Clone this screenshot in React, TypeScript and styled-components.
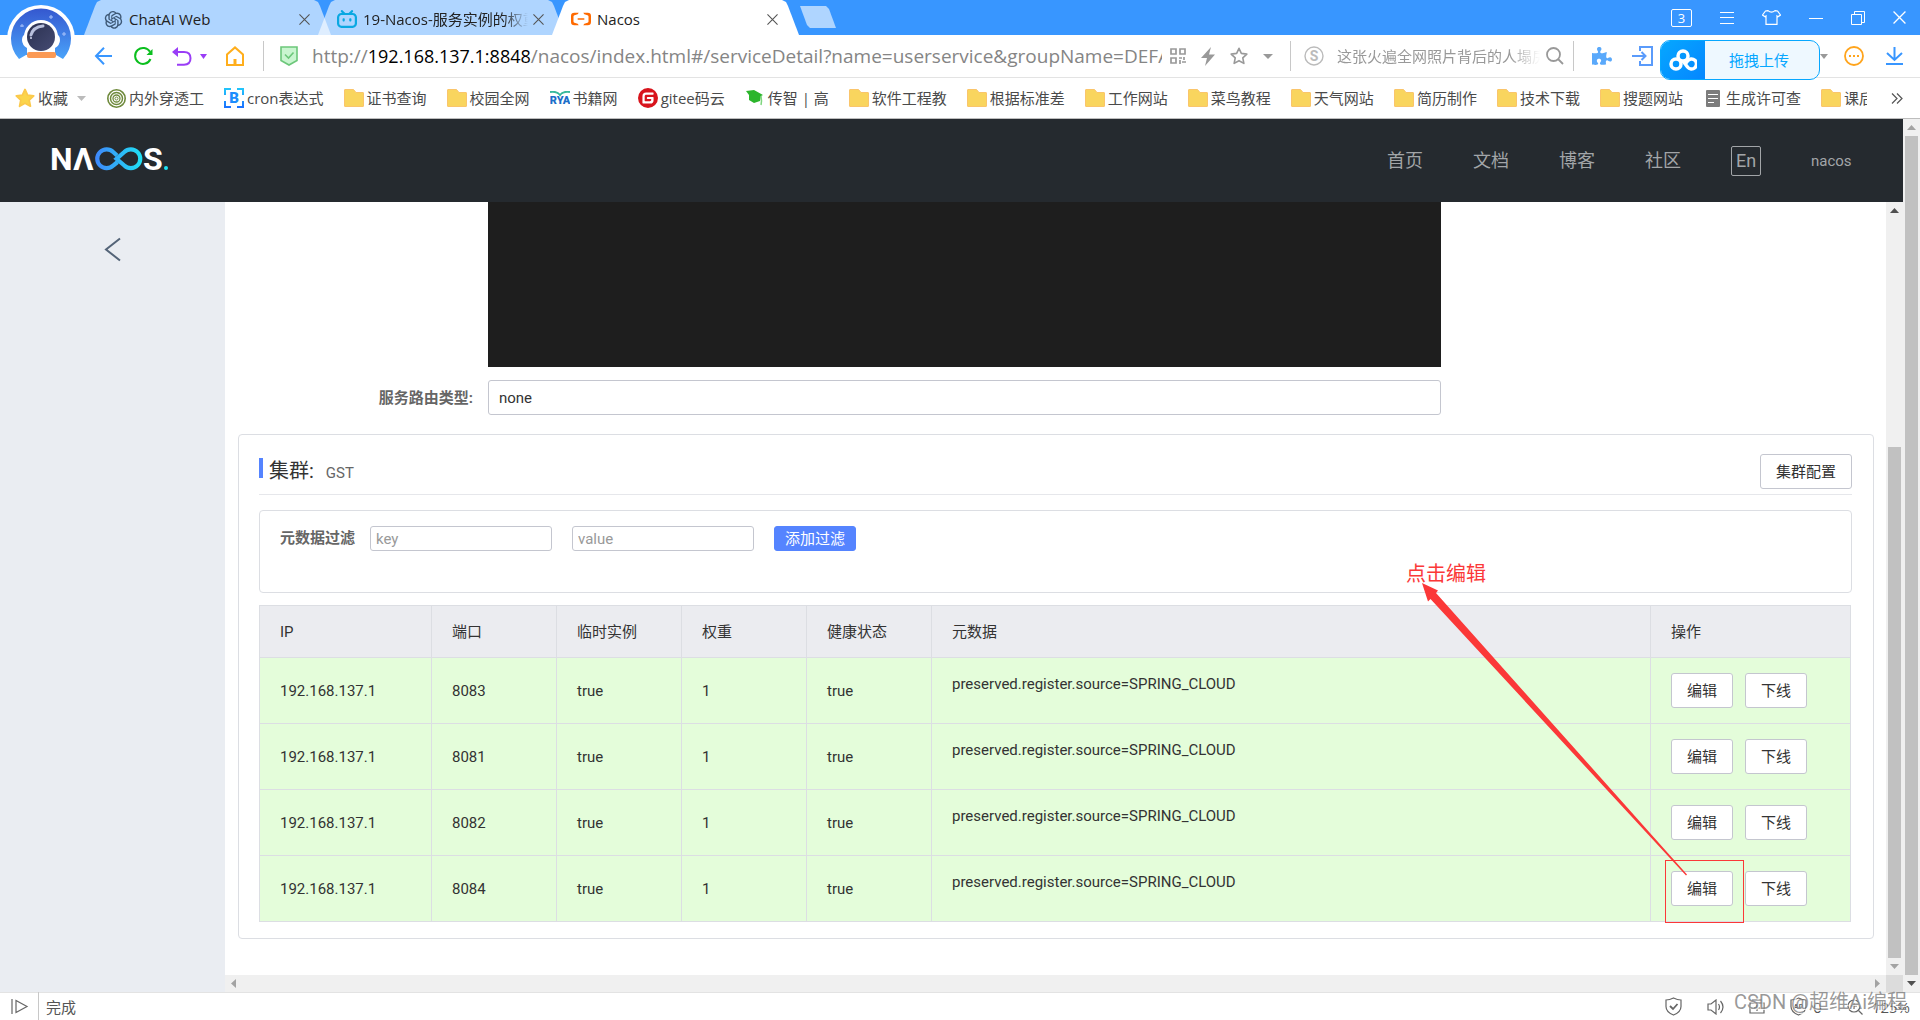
import React from "react";
import styled, { createGlobalStyle, css } from "styled-components";
import { AiOutlineOpenAI } from "react-icons/ai";
import { FaPuzzlePiece } from "react-icons/fa";
import { SiAlibabacloud, SiBilibili, SiGitee } from "react-icons/si";

const GlobalStyle = createGlobalStyle`
  *, *::before, *::after { box-sizing: border-box; }
  body { margin: 0; background: #fff; }
  button, input { font: inherit; color: inherit; }
  button { padding: 0; border: 0; background: none; cursor: pointer; }
  a { color: inherit; text-decoration: none; }
  svg { display: block; flex: none; }
`;

const uiFont = `"Open Sans", "Noto Sans CJK SC", sans-serif`;
const pageFont = `Roboto, "Noto Sans CJK SC", sans-serif`;

/* ---------- window ---------- */

const Window = styled.div`
  position: relative;
  display: flex;
  flex-direction: column;
  height: 100vh;
  overflow: hidden;
  font: 15px/20px ${uiFont};
  color: #333;
`;

const TitleBar = styled.div`
  display: flex;
  justify-content: space-between;
  height: 35px;
  padding-left: 84px;
  background: #3896ff;
`;

const Tabs = styled.div`
  display: flex;
`;

const Tab = styled.div<{ $active?: boolean }>`
  display: flex;
  align-items: center;
  gap: 5px;
  width: 247px;
  padding: 3px 21px 0 18px;
  margin-right: -13px;
  background: ${(p) => (p.$active ? "#fff" : "rgba(255, 255, 255, 0.6)")};
  clip-path: polygon(0 100%, 11px 6px, 13px 2px, 17px 0, 230px 0, 234px 2px, 236px 6px, 100% 100%);
  color: #222;
`;

const TabIcon = styled.span`
  display: flex;
  justify-content: center;
  width: 22px;
`;

const TabTitle = styled.span<{ $fade?: boolean }>`
  flex: 1;
  min-width: 0;
  overflow: hidden;
  white-space: nowrap;
  ${(p) =>
    p.$fade &&
    css`
      mask-image: linear-gradient(90deg, #000 85%, transparent);
    `}
`;

const IconButton = styled.button`
  display: flex;
  align-items: center;
  justify-content: center;
  flex: none;
`;

const NewTab = styled.button`
  width: 36px;
  height: 22px;
  margin: 6px 0 0 14px;
  background: #afd5ff;
  clip-path: polygon(0 0, 26px 0, 29px 3px, 100% 100%, 10px 100%, 7px 19px);
`;

const WindowControls = styled.div`
  display: flex;
  align-items: center;
  gap: 28px;
  padding-right: 14px;
  color: #fff;
`;

const TabCount = styled.button`
  width: 21px;
  height: 18px;
  border: 1px solid #fff;
  border-radius: 2px;
  font-size: 13px;
  line-height: 16px;
`;

/* ---------- address bar ---------- */

const Toolbar = styled.div`
  display: flex;
  align-items: center;
  height: 43px;
  padding: 0 17px 0 94px;
  border-bottom: 1px solid #e3e3e3;
`;

const NavButtons = styled.div`
  display: flex;
  align-items: center;
  gap: 19px;
`;

const UndoGroup = styled.div`
  display: flex;
  align-items: center;
  gap: 8px;
`;

const Divider = styled.span`
  flex: none;
  width: 1px;
  height: 30px;
  background: #c8c8c8;
`;

const AddressBar = styled.div`
  display: flex;
  flex: 1;
  align-items: center;
  gap: 14px;
  min-width: 0;
  padding: 0 17px 0 16px;
`;

const Address = styled.div`
  flex: 1;
  min-width: 0;
  overflow: hidden;
  white-space: nowrap;
  outline: none;
  font-size: 19px;
  line-height: 28px;
  color: #858585;
`;

const Host = styled.span`
  font-size: 18px;
  color: #000;
`;

const AddressTools = styled.div`
  display: flex;
  align-items: center;
  gap: 15px;
  margin-left: -6px;
`;

const SearchBox = styled.form`
  display: flex;
  align-items: center;
  width: 282px;
  padding: 0 9px 0 13px;
`;

const SearchInput = styled.input`
  flex: 1;
  min-width: 0;
  height: 28px;
  margin: 0 6px 0 13px;
  padding: 0;
  border: 0;
  outline: none;
  mask-image: linear-gradient(90deg, #000 85%, transparent);
  &::placeholder {
    color: #999;
    opacity: 1;
  }
`;

const Extensions = styled.div`
  display: flex;
  align-items: center;
  justify-content: space-between;
  width: 329px;
  padding-left: 18px;
`;

const ExtensionGroup = styled.div<{ $gap: number }>`
  display: flex;
  align-items: center;
  gap: ${(p) => p.$gap}px;
`;

const UploadWidget = styled.button`
  position: absolute;
  top: 40px;
  right: 100px;
  display: flex;
  width: 160px;
  height: 40px;
  border: 1px solid #06a7ff;
  border-radius: 10px;
  overflow: hidden;
  background: #eef8ff;
  color: #06a7ff;
`;

const UploadLogo = styled.span`
  display: flex;
  align-items: center;
  justify-content: center;
  width: 44px;
  height: 38px;
  background: linear-gradient(135deg, #06a7ff, #0586ff);
`;

const UploadText = styled.span`
  flex: 1;
  padding-right: 6px;
  line-height: 38px;
  text-align: center;
`;

const Avatar = styled.button`
  position: absolute;
  top: 4px;
  left: 6px;
`;

/* ---------- bookmarks ---------- */

const Bookmarks = styled.nav`
  display: flex;
  align-items: center;
  height: 41px;
  padding: 0 17px 0 15px;
  border-bottom: 1px solid #bdbdbd;
  color: #4a4a4a;
`;

const Favorites = styled.button`
  display: flex;
  align-items: center;
  gap: 3px;
  margin-right: 20px;
`;

const FavoritesText = styled.span`
  margin-right: 6px;
`;

const BookmarkList = styled.div`
  display: flex;
  flex: 1;
  gap: 20px;
  min-width: 0;
  margin-right: 24px;
  overflow: hidden;
`;

const Bookmark = styled.a`
  display: flex;
  flex: none;
  align-items: center;
  gap: 3px;
  white-space: nowrap;
`;

const BookmarkIcon = styled.span`
  display: flex;
  justify-content: center;
  width: 20px;
`;

/* ---------- scroll bars ---------- */

const ScrollTrack = styled.div<{ $horizontal?: boolean }>`
  display: flex;
  flex: none;
  flex-direction: ${(p) => (p.$horizontal ? "row" : "column")};
  justify-content: space-between;
  ${(p) => (p.$horizontal ? "height: 17px;" : "width: 17px;")}
  background: #f0f0f0;
`;

const ScrollArrow = styled.button<{ $dark?: boolean }>`
  display: flex;
  flex: none;
  align-items: center;
  justify-content: center;
  width: 17px;
  height: 17px;
  color: ${(p) => (p.$dark ? "#505050" : "#a3a3a3")};
`;

const ScrollSpace = styled.div<{ $grow: number }>`
  flex: ${(p) => p.$grow} 0 0;
`;

const ScrollThumb = styled(ScrollSpace)`
  margin: 0 2px;
  background: #c1c1c1;
`;

const ScrollCorner = styled.div`
  background: #dcdcdc;
`;

/* ---------- console page ---------- */

const Viewport = styled.div`
  display: flex;
  flex: 1;
  min-height: 0;
`;

const Console = styled.div`
  display: flex;
  flex: 1;
  flex-direction: column;
  min-width: 0;
  font-family: ${pageFont};
`;

const Header = styled.header`
  display: flex;
  flex: none;
  align-items: center;
  justify-content: space-between;
  height: 83px;
  padding: 0 50px 0 51px;
  background: #252a2f;
`;

const HeaderNav = styled.nav`
  display: flex;
  align-items: center;
  gap: 50px;
  font-size: 18px;
  color: #a2a5a8;
`;

const LanguageButton = styled.button`
  width: 30px;
  height: 30px;
  border: 1px solid #a2a5a8;
  border-radius: 2px;
  line-height: 26px;
`;

const UserLink = styled.a`
  min-width: 42px;
  font-size: 15px;
`;

const Body = styled.div`
  display: flex;
  flex: 1;
  min-height: 0;
`;

const Sidebar = styled.aside`
  flex: none;
  width: 225px;
  padding: 35px 0 0 104px;
  background: #eaedf2;
`;

const ScrollGrid = styled.div`
  display: grid;
  flex: 1;
  grid-template: minmax(0, 1fr) 17px / minmax(0, 1fr) 17px;
  min-width: 0;
`;

const Content = styled.main`
  padding: 0 12px 0 13px;
  overflow: hidden;
`;

const FormRow = styled.div`
  display: grid;
  grid-template-columns: 250px 11fr 5fr;
  align-items: center;
  margin-bottom: 13px;
`;

const FormLabel = styled.label`
  padding-right: 15px;
  text-align: right;
  font-weight: 700;
  color: #666;
`;

const CodeEditor = styled.div`
  grid-column: 2;
  height: 165px;
  background: #1e1e1e;
`;

const TextField = styled.input<{ $small?: boolean }>`
  width: ${(p) => (p.$small ? "182px" : "100%")};
  height: ${(p) => (p.$small ? "25px" : "35px")};
  padding: 0 ${(p) => (p.$small ? "5px" : "10px")};
  border: 1px solid #c4c6cf;
  border-radius: 3px;
  outline: none;
  &::placeholder {
    color: #999;
    opacity: 1;
  }
`;

const Button = styled.button<{ $primary?: boolean }>`
  height: 35px;
  padding: 0 15px;
  border: 1px solid #c4c6cf;
  border-radius: 3px;
  background: #fff;
  white-space: nowrap;
  ${(p) =>
    p.$primary &&
    css`
      height: 25px;
      padding: 0 10px;
      border-color: #5584ff;
      background: #5584ff;
      color: #fff;
    `}
`;

const Card = styled.section`
  margin-top: 19px;
  padding: 19px 21px 16px 20px;
  border: 1px solid #dcdee3;
  border-radius: 4px;
`;

const CardHeader = styled.div`
  display: flex;
  align-items: center;
  justify-content: space-between;
  padding-bottom: 5px;
  border-bottom: 1px solid #e6e7eb;
`;

const CardTitle = styled.h2`
  display: flex;
  align-items: baseline;
  margin: 0;
  font-size: 20px;
  font-weight: 400;
  line-height: 26px;
  &::before {
    content: "";
    align-self: flex-start;
    width: 4px;
    height: 20px;
    margin-right: 6px;
    background: #5584ff;
  }
`;

const ClusterName = styled.span`
  margin-left: 12px;
  font-size: 15px;
  color: #666;
`;

const FilterBox = styled.form`
  display: flex;
  align-items: flex-start;
  gap: 20px;
  height: 83px;
  margin: 15px 0 12px;
  padding: 15px 20px;
  border: 1px solid #dcdee3;
  border-radius: 4px;
`;

const FilterLabel = styled.label`
  margin-right: -5px;
  font-weight: 700;
  line-height: 25px;
  color: #666;
`;

const Table = styled.table`
  width: calc(100% - 1px);
  border-collapse: collapse;
  table-layout: fixed;
`;

const Column = styled.col<{ $width?: number }>`
  width: ${(p) => (p.$width ? `${p.$width}px` : "auto")};
`;

const HeadCell = styled.th`
  height: 52px;
  padding: 0 20px;
  border: 1px solid #dcdee3;
  background: #ebecf0;
  font-weight: 400;
  text-align: left;
`;

const Cell = styled.td`
  height: 66px;
  padding: 0 20px;
  border: 1px solid #dcdee3;
  background: #e4fdda;
`;

const Metadata = styled.p`
  margin: 0 0 13px;
`;

const Actions = styled.div`
  display: flex;
  gap: 12px;
`;

const Marked = styled.div`
  position: relative;
`;

const MarkFrame = styled.span`
  position: absolute;
  top: -11px;
  left: -6px;
  width: 79px;
  height: 63px;
  border: 1px solid #fb3838;
  pointer-events: none;
`;

const MarkArrow = styled.svg`
  position: absolute;
  top: -288px;
  left: -249px;
  pointer-events: none;
`;

const MarkText = styled.span`
  position: absolute;
  top: -311px;
  left: -265px;
  font-size: 20px;
  line-height: 28px;
  white-space: nowrap;
  color: #fb3838;
`;

/* ---------- status bar ---------- */

const StatusBar = styled.footer`
  display: flex;
  align-items: center;
  justify-content: space-between;
  height: 28px;
  padding: 0 10px 0 11px;
  border-top: 1px solid #e3e3e3;
  color: #555;
`;

const StatusGroup = styled.div<{ $gap: number }>`
  display: flex;
  align-items: center;
  gap: ${(p) => p.$gap}px;
`;

const AdBlock = styled.button`
  display: flex;
  align-items: center;
  gap: 6px;
`;

const ZoomButton = styled(AdBlock)`
  gap: 9px;
`;

const Watermark = styled.span`
  position: absolute;
  right: 13px;
  bottom: 4px;
  font: 20px/28px Roboto, "Noto Sans CJK SC", sans-serif;
  color: rgba(120, 120, 120, 0.75);
  text-shadow: 1px 1px 0 rgba(255, 255, 255, 0.8);
  pointer-events: none;
`;

/* ---------- drawings ---------- */

const Caret = ({ color = "#999", size = 9 }: { color?: string; size?: number }) => (
  <svg width={size} height="5" viewBox="0 0 10 6" preserveAspectRatio="none">
    <path d="M0 0h10L5 6z" fill={color} />
  </svg>
);

const CloseIcon = ({ size = 11, color = "#555" }: { size?: number; color?: string }) => (
  <svg width={size} height={size} viewBox="0 0 12 12" stroke={color} strokeWidth="1.2">
    <path d="M.5.5l11 11M11.500.5l-11 11" />
  </svg>
);

const AvatarDrawing = () => (
  <svg width="70" height="66" viewBox="0 0 70 66">
    <defs>
      <linearGradient id="sky" x2="0" y2="1">
        <stop offset="0" stopColor="#3558cf" />
        <stop offset="1" stopColor="#4aa3fa" />
      </linearGradient>
      <linearGradient id="visor" x2="1" y2="1">
        <stop offset="0" stopColor="#2b3050" />
        <stop offset="1" stopColor="#454b73" />
      </linearGradient>
    </defs>
    <circle cx="35" cy="35" r="34" fill="#fff" />
    <path d="M13 55A30 30 0 1 1 57 55L50 51H20z" fill="url(#sky)" />
    <path d="M20 30q-4 1-4 6t5 8v8l-4 3h36l-4-3v-8q5-3 5-8t-4-6z" fill="#fff" />
    <circle cx="35" cy="33" r="17" fill="#fff" />
    <circle cx="35" cy="33" r="14" fill="url(#visor)" />
    <path d="M25 31q2-8 12-9" fill="none" stroke="#b9c0dc" strokeWidth="3" strokeLinecap="round" />
    <circle cx="25" cy="34" r="1" fill="#d5daef" />
    <rect x="21" y="48" width="29" height="6" rx="2" fill="#fb9a55" />
    <path d="M45 11v4M43 13h4M58 28v4M56 30h4M16 20v3M14 22h4" stroke="#a9c3fb" />
  </svg>
);

const NacosLogo = () => (
  <svg width="120" height="30" viewBox="0 0 120 30" role="img" aria-label="Nacos">
    <defs>
      <linearGradient id="loop" gradientUnits="userSpaceOnUse" x1="44" x2="92">
        <stop offset="0" stopColor="#3f86fb" />
        <stop offset="1" stopColor="#1fe3f4" />
      </linearGradient>
    </defs>
    <g fill="#fff" fontSize="32" fontWeight="700">
      <text x="-1" y="24" fontFamily="Liberation Sans Narrow, Roboto, sans-serif">N</text>
      <text x="22" y="24" fontFamily="Roboto, sans-serif">Λ</text>
      <text x="92" y="24" fontFamily="Roboto, sans-serif">S</text>
    </g>
    <g fill="none" stroke="url(#loop)" strokeWidth="4.200">
      <path d="M66 9.500L62.200 6A9.400 9.400 0 1 0 62.200 19.500L66.500 16" />
      <path d="M65.500 12.800L73.300 6A9.400 9.400 0 1 1 73.300 19.500z" />
    </g>
    <circle cx="115" cy="22" r="2" fill="#1fe3f4" />
  </svg>
);

const FolderIcon = () => (
  <svg width="20" height="18" viewBox="0 0 20 18">
    <path d="M.5 1q0-.5.5-.5h8.500l2.500 3H19q.5 0 .5.5v13q0 .5-.5.5H1q-.5 0-.5-.5z" fill="#f9d55e" stroke="#fac56b" />
  </svg>
);

const SpiralIcon = () => (
  <svg width="19" height="19" viewBox="0 0 19 19" fill="none" stroke="#6f8a3c">
    <circle cx="9.500" cy="9.500" r="8.700" strokeWidth="1.600" />
    <circle cx="9.500" cy="9.500" r="6" strokeWidth="1.500" />
    <circle cx="9.500" cy="9.500" r="3.500" strokeWidth="1.300" />
    <circle cx="9.500" cy="9.500" r="1.500" />
  </svg>
);

const BracketIcon = () => (
  <svg width="20" height="20" viewBox="0 0 20 20">
    <defs>
      <linearGradient id="frame" x2="0" y2="1">
        <stop offset="0" stopColor="#22c4fb" />
        <stop offset="1" stopColor="#1a73ff" />
      </linearGradient>
    </defs>
    <path d="M1 7V1h6M13 1h6v6M19 13v6h-6M7 19H1v-6" fill="none" stroke="url(#frame)" strokeWidth="2" />
    <text x="10" y="15" textAnchor="middle" fontFamily="Roboto, sans-serif" fontSize="15" fontWeight="900" fill="#1d8dfd">
      B
    </text>
  </svg>
);

const BooksIcon = () => (
  <svg width="20" height="14" viewBox="0 0 20 14">
    <path d="M0 1q7-1 10 3q3-4 10-3" fill="none" stroke="#38b99b" strokeWidth="2" />
    <text x="10" y="13" textAnchor="middle" fontFamily="Roboto, sans-serif" fontSize="11" fontWeight="900" fill="#1c6fc9">
      RYA
    </text>
  </svg>
);

const CapIcon = () => (
  <svg width="20" height="18" viewBox="0 0 20 18">
    <path d="M1 2l8-1 9 5-2 1-1 5-6 2-5-3V6z" fill="#2cb52c" />
    <path d="M16 7q1 5 0 9" fill="none" stroke="#7fd67f" strokeWidth="1.500" />
  </svg>
);

const NoteIcon = () => (
  <svg width="14" height="17" viewBox="0 0 14 17">
    <rect width="14" height="17" rx="1" fill="#7c7c7c" />
    <path d="M2 4.500h10M2 8.500h10M2 12.500h6" stroke="#fff" />
  </svg>
);

const StarShape = ({ size, fill, stroke }: { size: number; fill: string; stroke: string }) => (
  <svg width={size} height={size} viewBox="0 0 20 20">
    <path
      d="M10 1.500l2.600 5.600 6.100.8-4.500 4.200 1.200 6.100L10 15.200l-5.400 3 1.200-6.100L1.300 7.900l6.100-.8z"
      fill={fill}
      stroke={stroke}
      strokeWidth="1.800"
      strokeLinejoin="round"
    />
  </svg>
);

/* ---------- data ---------- */

const bookmarks: { label: string; icon?: React.ReactNode }[] = [
  { label: "内外穿透工", icon: <SpiralIcon /> },
  { label: "cron表达式", icon: <BracketIcon /> },
  { label: "证书查询" },
  { label: "校园全网" },
  { label: "书籍网", icon: <BooksIcon /> },
  { label: "gitee码云", icon: <SiGitee size={20} color="#d8141c" /> },
  { label: "传智 | 高", icon: <CapIcon /> },
  { label: "软件工程教" },
  { label: "根据标准差" },
  { label: "工作网站" },
  { label: "菜鸟教程" },
  { label: "天气网站" },
  { label: "简历制作" },
  { label: "技术下载" },
  { label: "搜题网站" },
  { label: "生成许可查", icon: <NoteIcon /> },
  { label: "课后作业" },
];

const columns: { title: string; width?: number }[] = [
  { title: "IP", width: 172 },
  { title: "端口", width: 125 },
  { title: "临时实例", width: 125 },
  { title: "权重", width: 125 },
  { title: "健康状态", width: 125 },
  { title: "元数据" },
  { title: "操作", width: 200 },
];

const instances = ["8083", "8081", "8082", "8084"].map((port) => ({
  ip: "192.168.137.1",
  port,
  ephemeral: "true",
  weight: 1,
  healthy: "true",
  metadata: "preserved.register.source=SPRING_CLOUD",
}));

/* ---------- parts ---------- */

const arrowPaths = {
  up: "M0 7h9L4.500 2z",
  down: "M0 2h9L4.500 7z",
  left: "M7 0v9L2 4.500z",
  right: "M2 0v9l5-4.500z",
};

function Arrow({ direction, dark }: { direction: keyof typeof arrowPaths; dark?: boolean }) {
  return (
    <ScrollArrow type="button" $dark={dark} aria-label={`scroll ${direction}`}>
      <svg width="9" height="9" viewBox="0 0 9 9" fill="currentColor">
        <path d={arrowPaths[direction]} />
      </svg>
    </ScrollArrow>
  );
}

function BrowserTabs() {
  return (
    <TitleBar>
      <Tabs>
        <Tab>
          <TabIcon>
            <AiOutlineOpenAI size={23} color="#3f5a78" />
          </TabIcon>
          <TabTitle>ChatAI Web</TabTitle>
          <IconButton type="button" aria-label="关闭标签">
            <CloseIcon />
          </IconButton>
        </Tab>
        <Tab>
          <TabIcon>
            <SiBilibili size={20} color="#0aa8e2" />
          </TabIcon>
          <TabTitle $fade>19-Nacos-服务实例的权重</TabTitle>
          <IconButton type="button" aria-label="关闭标签">
            <CloseIcon />
          </IconButton>
        </Tab>
        <Tab $active>
          <TabIcon>
            <SiAlibabacloud size={20} color="#ff6a00" />
          </TabIcon>
          <TabTitle>Nacos</TabTitle>
          <IconButton type="button" aria-label="关闭标签">
            <CloseIcon />
          </IconButton>
        </Tab>
        <NewTab type="button" aria-label="新标签" />
      </Tabs>
      <WindowControls>
        <TabCount type="button">3</TabCount>
        <IconButton type="button" aria-label="菜单">
          <svg width="14" height="12" viewBox="0 0 14 12" stroke="#fff">
            <path d="M0 .5h14M0 5.500h14M0 11.500h14" />
          </svg>
        </IconButton>
        <IconButton type="button" aria-label="皮肤">
          <svg width="19" height="15" viewBox="0 0 19 15" fill="none" stroke="#fff" strokeWidth="1.200">
            <path d="M6 .6q3.500 3 7 0l2.500.4 3 4-2.500 1.800-1-.8v8.400H4V6l-1 .8L.5 5l3-4z" />
          </svg>
        </IconButton>
        <IconButton type="button" aria-label="最小化">
          <svg width="14" height="12" viewBox="0 0 14 12" stroke="#fff">
            <path d="M0 6.500h14" />
          </svg>
        </IconButton>
        <IconButton type="button" aria-label="还原">
          <svg width="14" height="14" viewBox="0 0 14 14" fill="none" stroke="#fff">
            <path d="M.5 3.500h10v10H.5zM3.500 3V.5h10v11H11" />
          </svg>
        </IconButton>
        <IconButton type="button" aria-label="关闭">
          <CloseIcon size={13} color="#fff" />
        </IconButton>
      </WindowControls>
    </TitleBar>
  );
}

function BrowserToolbar() {
  return (
    <Toolbar>
      <NavButtons>
        <IconButton type="button" aria-label="后退">
          <svg width="20" height="18" viewBox="0 0 20 18" fill="none" stroke="#3896ff" strokeWidth="2">
            <path d="M18 9H2M10 .8L2 9l8 8.200" />
          </svg>
        </IconButton>
        <IconButton type="button" aria-label="刷新">
          <svg width="20" height="20" viewBox="0 0 20 20">
            <path d="M17.500 13A8 8 0 1 1 17 5.800" fill="none" stroke="#0bbf1e" strokeWidth="2" />
            <path d="M19.500 3v6h-6z" fill="#0bbf1e" />
          </svg>
        </IconButton>
        <UndoGroup>
          <IconButton type="button" aria-label="撤销">
            <svg width="20" height="19" viewBox="0 0 20 19">
              <path d="M4 5h8q6.500 0 6.500 6.300T12 17.700H5" fill="none" stroke="#9a3df6" strokeWidth="2" />
              <path d="M6 0v10L0 5z" fill="#9a3df6" />
            </svg>
          </IconButton>
          <Caret color="#9a3df6" size={7} />
        </UndoGroup>
        <IconButton type="button" aria-label="主页">
          <svg width="18" height="20" viewBox="0 0 18 20" fill="none" stroke="#ffae1c" strokeWidth="2">
            <path d="M1 18.900V8.500L9 1.400l8 7.100v10.400z" />
            <path d="M9 19v-6" strokeWidth="3" />
          </svg>
        </IconButton>
        <Divider />
      </NavButtons>
      <AddressBar>
        <svg width="18" height="20" viewBox="0 0 18 20" fill="#c9f5d0" stroke="#6cc77a" strokeWidth="1.600">
          <path d="M1 1h16v13.500L9 19l-8-4.500z" />
          <path d="M5 8.500l3.500 3.500 5-5.500" fill="none" />
        </svg>
        <Address role="textbox" aria-label="地址" contentEditable suppressContentEditableWarning spellCheck={false}>
          http://<Host>192.168.137.1:8848</Host>
          /nacos/index.html#/serviceDetail?name=userservice&amp;groupName=DEFAULT_GROUP
        </Address>
        <AddressTools>
          <IconButton type="button" aria-label="二维码">
            <svg width="16" height="16" viewBox="0 0 16 16" fill="none" stroke="#999" strokeWidth="1.700">
              <path d="M1 1h5v5H1zM10 1h5v5h-5zM1 10h5v5H1z" />
              <path d="M9 10h3M14 9v3M10 12v4M12 14h4" />
            </svg>
          </IconButton>
          <IconButton type="button" aria-label="加速">
            <svg width="14" height="19" viewBox="0 0 14 19" fill="#999">
              <path d="M10 0L0 11h6L4 19 14 7.500H8z" />
            </svg>
          </IconButton>
          <IconButton type="button" aria-label="收藏本页">
            <StarShape size={18} fill="none" stroke="#999" />
          </IconButton>
          <IconButton type="button" aria-label="更多">
            <Caret size={10} />
          </IconButton>
        </AddressTools>
      </AddressBar>
      <Divider />
      <SearchBox role="search">
        <svg width="20" height="20" viewBox="0 0 20 20">
          <circle cx="10" cy="10" r="9" fill="none" stroke="#bbb" strokeWidth="1.400" />
          <text x="10" y="15" textAnchor="middle" fontFamily="Roboto, sans-serif" fontSize="14" fontWeight="700" fill="#bbb">
            S
          </text>
        </svg>
        <SearchInput aria-label="搜索" placeholder="这张火遍全网照片背后的人塌房了" />
        <IconButton type="button" aria-label="搜索">
          <svg width="18" height="18" viewBox="0 0 18 18" fill="none" stroke="#999" strokeWidth="1.800">
            <circle cx="7.500" cy="7.500" r="6.500" />
            <path d="M12 12l5 5" />
          </svg>
        </IconButton>
      </SearchBox>
      <Divider />
      <Extensions>
        <ExtensionGroup $gap={20}>
          <IconButton type="button" aria-label="扩展">
            <FaPuzzlePiece size={20} color="#5aa9fb" />
          </IconButton>
          <IconButton type="button" aria-label="发送到手机">
            <svg width="21" height="20" viewBox="0 0 21 20" fill="none" stroke="#5a9bfb" strokeWidth="2">
              <path d="M8 5V1h12v18H8v-4M0 10h13M9.500 6l4 4-4 4" />
            </svg>
          </IconButton>
        </ExtensionGroup>
        <ExtensionGroup $gap={22}>
          <ExtensionGroup $gap={16}>
            <Caret size={8} />
            <IconButton type="button" aria-label="更多工具">
              <svg width="20" height="20" viewBox="0 0 20 20">
                <circle cx="10" cy="10" r="9" fill="none" stroke="#ffa41c" strokeWidth="1.800" />
                <path d="M5 10h2M9 10h2M13 10h2" stroke="#ffa41c" strokeWidth="2" />
              </svg>
            </IconButton>
          </ExtensionGroup>
          <IconButton type="button" aria-label="下载">
            <svg width="17" height="18" viewBox="0 0 17 18" fill="none" stroke="#3896ff" strokeWidth="2">
              <path d="M8.500 0v13M1 6l7.500 7L16 6M0 17h17" />
            </svg>
          </IconButton>
        </ExtensionGroup>
      </Extensions>
    </Toolbar>
  );
}

function BookmarkBar() {
  return (
    <Bookmarks aria-label="收藏栏">
      <Favorites type="button">
        <StarShape size={20} fill="#fbd54b" stroke="#fbc94b" />
        <FavoritesText>收藏</FavoritesText>
        <Caret color="#bbb" size={9} />
      </Favorites>
      <BookmarkList>
        {bookmarks.map(({ label, icon }) => (
          <Bookmark key={label} href="#">
            <BookmarkIcon>{icon ?? <FolderIcon />}</BookmarkIcon>
            {label}
          </Bookmark>
        ))}
      </BookmarkList>
      <IconButton type="button" aria-label="更多收藏">
        <svg width="12" height="11" viewBox="0 0 12 11" fill="none" stroke="#555" strokeWidth="1.200">
          <path d="M1 .5l5 5-5 5M6 .5l5 5-5 5" />
        </svg>
      </IconButton>
    </Bookmarks>
  );
}

function InstanceTable() {
  return (
    <Table>
      <colgroup>
        {columns.map((column) => (
          <Column key={column.title} $width={column.width} />
        ))}
      </colgroup>
      <thead>
        <tr>
          {columns.map((column) => (
            <HeadCell key={column.title} scope="col">
              {column.title}
            </HeadCell>
          ))}
        </tr>
      </thead>
      <tbody>
        {instances.map((instance, index) => (
          <tr key={instance.port}>
            <Cell>{instance.ip}</Cell>
            <Cell>{instance.port}</Cell>
            <Cell>{instance.ephemeral}</Cell>
            <Cell>{instance.weight}</Cell>
            <Cell>{instance.healthy}</Cell>
            <Cell>
              <Metadata>{instance.metadata}</Metadata>
            </Cell>
            <Cell>
              <Actions>
                {index === instances.length - 1 ? (
                  <Marked>
                    <Button type="button">编辑</Button>
                    <MarkFrame />
                    <MarkText>点击编辑</MarkText>
                    <MarkArrow width="265" height="293" viewBox="0 0 265 293" fill="#fb3838">
                      <path d="M0 0L16 7.500 14 10 265 291.500 264 292.500 8.500 16 6 18.500z" />
                    </MarkArrow>
                  </Marked>
                ) : (
                  <Button type="button">编辑</Button>
                )}
                <Button type="button">下线</Button>
              </Actions>
            </Cell>
          </tr>
        ))}
      </tbody>
    </Table>
  );
}

function ServiceDetail() {
  return (
    <Content>
      <FormRow>
        <CodeEditor />
      </FormRow>
      <FormRow>
        <FormLabel htmlFor="selector">服务路由类型:</FormLabel>
        <TextField id="selector" defaultValue="none" readOnly />
      </FormRow>
      <Card>
        <CardHeader>
          <CardTitle>
            集群:<ClusterName>GST</ClusterName>
          </CardTitle>
          <Button type="button">集群配置</Button>
        </CardHeader>
        <FilterBox>
          <FilterLabel htmlFor="filter-key">元数据过滤</FilterLabel>
          <TextField $small id="filter-key" placeholder="key" />
          <TextField $small aria-label="value" placeholder="value" />
          <Button $primary type="button">
            添加过滤
          </Button>
        </FilterBox>
        <InstanceTable />
      </Card>
    </Content>
  );
}

function Status() {
  return (
    <StatusBar>
      <StatusGroup $gap={7}>
        <svg width="20" height="15" viewBox="0 0 20 15" fill="none" stroke="#666" strokeWidth="1.200">
          <path d="M1 0v15M5 1.500v12L16 7.500z" />
        </svg>
        <Divider />
        完成
      </StatusGroup>
      <StatusGroup $gap={25}>
        <IconButton type="button" aria-label="安全">
          <svg width="17" height="19" viewBox="0 0 17 19" fill="none" stroke="#666" strokeWidth="1.200">
            <path d="M8.500 1q4 2 7.500 2v6.500q0 5.500-7.500 8.500Q1 15 1 9.500V3q3.500 0 7.500-2z" />
            <path d="M5 9l3 3 4.500-5" strokeWidth="1.800" />
          </svg>
        </IconButton>
        <IconButton type="button" aria-label="声音">
          <svg width="17" height="16" viewBox="0 0 17 16" fill="none" stroke="#666" strokeWidth="1.200">
            <path d="M1 5h3l5-4v14l-5-4H1zM11.500 5q2 3 0 6M13.500 2q5 6 0 12" />
          </svg>
        </IconButton>
        <IconButton type="button" aria-label="分屏">
          <svg width="16" height="15" viewBox="0 0 16 15" fill="none" stroke="#666" strokeWidth="1.200">
            <path d="M1 4h14v10H1zM3 1h10M8 6v6M5 9h6" />
          </svg>
        </IconButton>
        <AdBlock type="button">
          <svg width="17" height="19" viewBox="0 0 17 19">
            <path
              d="M8.500 1q4 2 7.500 2v6.500q0 5.500-7.500 8.500Q1 15 1 9.500V3q3.500 0 7.500-2z"
              fill="none"
              stroke="#666"
              strokeWidth="1.200"
            />
            <text x="8.500" y="12" textAnchor="middle" fontFamily="Roboto, sans-serif" fontSize="8" fontWeight="700" fill="#666">
              AD
            </text>
          </svg>
          0
        </AdBlock>
        <ZoomButton type="button">
          <svg width="16" height="16" viewBox="0 0 16 16" fill="none" stroke="#666" strokeWidth="1.200">
            <circle cx="7" cy="7" r="6" />
            <path d="M11.500 11.500l4 4M4 7h6M7 4v6" />
          </svg>
          125%
        </ZoomButton>
      </StatusGroup>
    </StatusBar>
  );
}

export default function App() {
  return (
    <>
      <GlobalStyle />
      <Window>
        <BrowserTabs />
        <BrowserToolbar />
        <BookmarkBar />
        <Viewport>
          <Console>
            <Header>
              <NacosLogo />
              <HeaderNav>
                <a href="#">首页</a>
                <a href="#">文档</a>
                <a href="#">博客</a>
                <a href="#">社区</a>
                <LanguageButton type="button">En</LanguageButton>
                <UserLink href="#">nacos</UserLink>
              </HeaderNav>
            </Header>
            <Body>
              <Sidebar>
                <IconButton type="button" aria-label="返回">
                  <svg width="17" height="25" viewBox="0 0 17 25" fill="none" stroke="#546478" strokeWidth="2">
                    <path d="M16 1.500L2 12.500l14 11" />
                  </svg>
                </IconButton>
              </Sidebar>
              <ScrollGrid>
                <ServiceDetail />
                <ScrollTrack>
                  <Arrow direction="up" dark />
                  <ScrollSpace $grow={228} />
                  <ScrollThumb $grow={511} />
                  <Arrow direction="down" />
                </ScrollTrack>
                <ScrollTrack $horizontal>
                  <Arrow direction="left" />
                  <Arrow direction="right" />
                </ScrollTrack>
                <ScrollCorner />
              </ScrollGrid>
            </Body>
          </Console>
          <ScrollTrack>
            <Arrow direction="up" />
            <ScrollThumb $grow={1} />
            <Arrow direction="down" dark />
          </ScrollTrack>
        </Viewport>
        <Status />
        <Avatar type="button" aria-label="用户">
          <AvatarDrawing />
        </Avatar>
        <UploadWidget type="button">
          <UploadLogo>
            <svg width="28" height="22" viewBox="0 0 28 22" fill="none" stroke="#fff" strokeWidth="3.500">
              <circle cx="14" cy="7" r="5" />
              <circle cx="7" cy="15" r="5" />
              <path d="M14 12l4.500 6a5 5 0 1 0 0-6l-3 4" />
            </svg>
          </UploadLogo>
          <UploadText>拖拽上传</UploadText>
        </UploadWidget>
        <Watermark>CSDN @超维Ai编程</Watermark>
      </Window>
    </>
  );
}
